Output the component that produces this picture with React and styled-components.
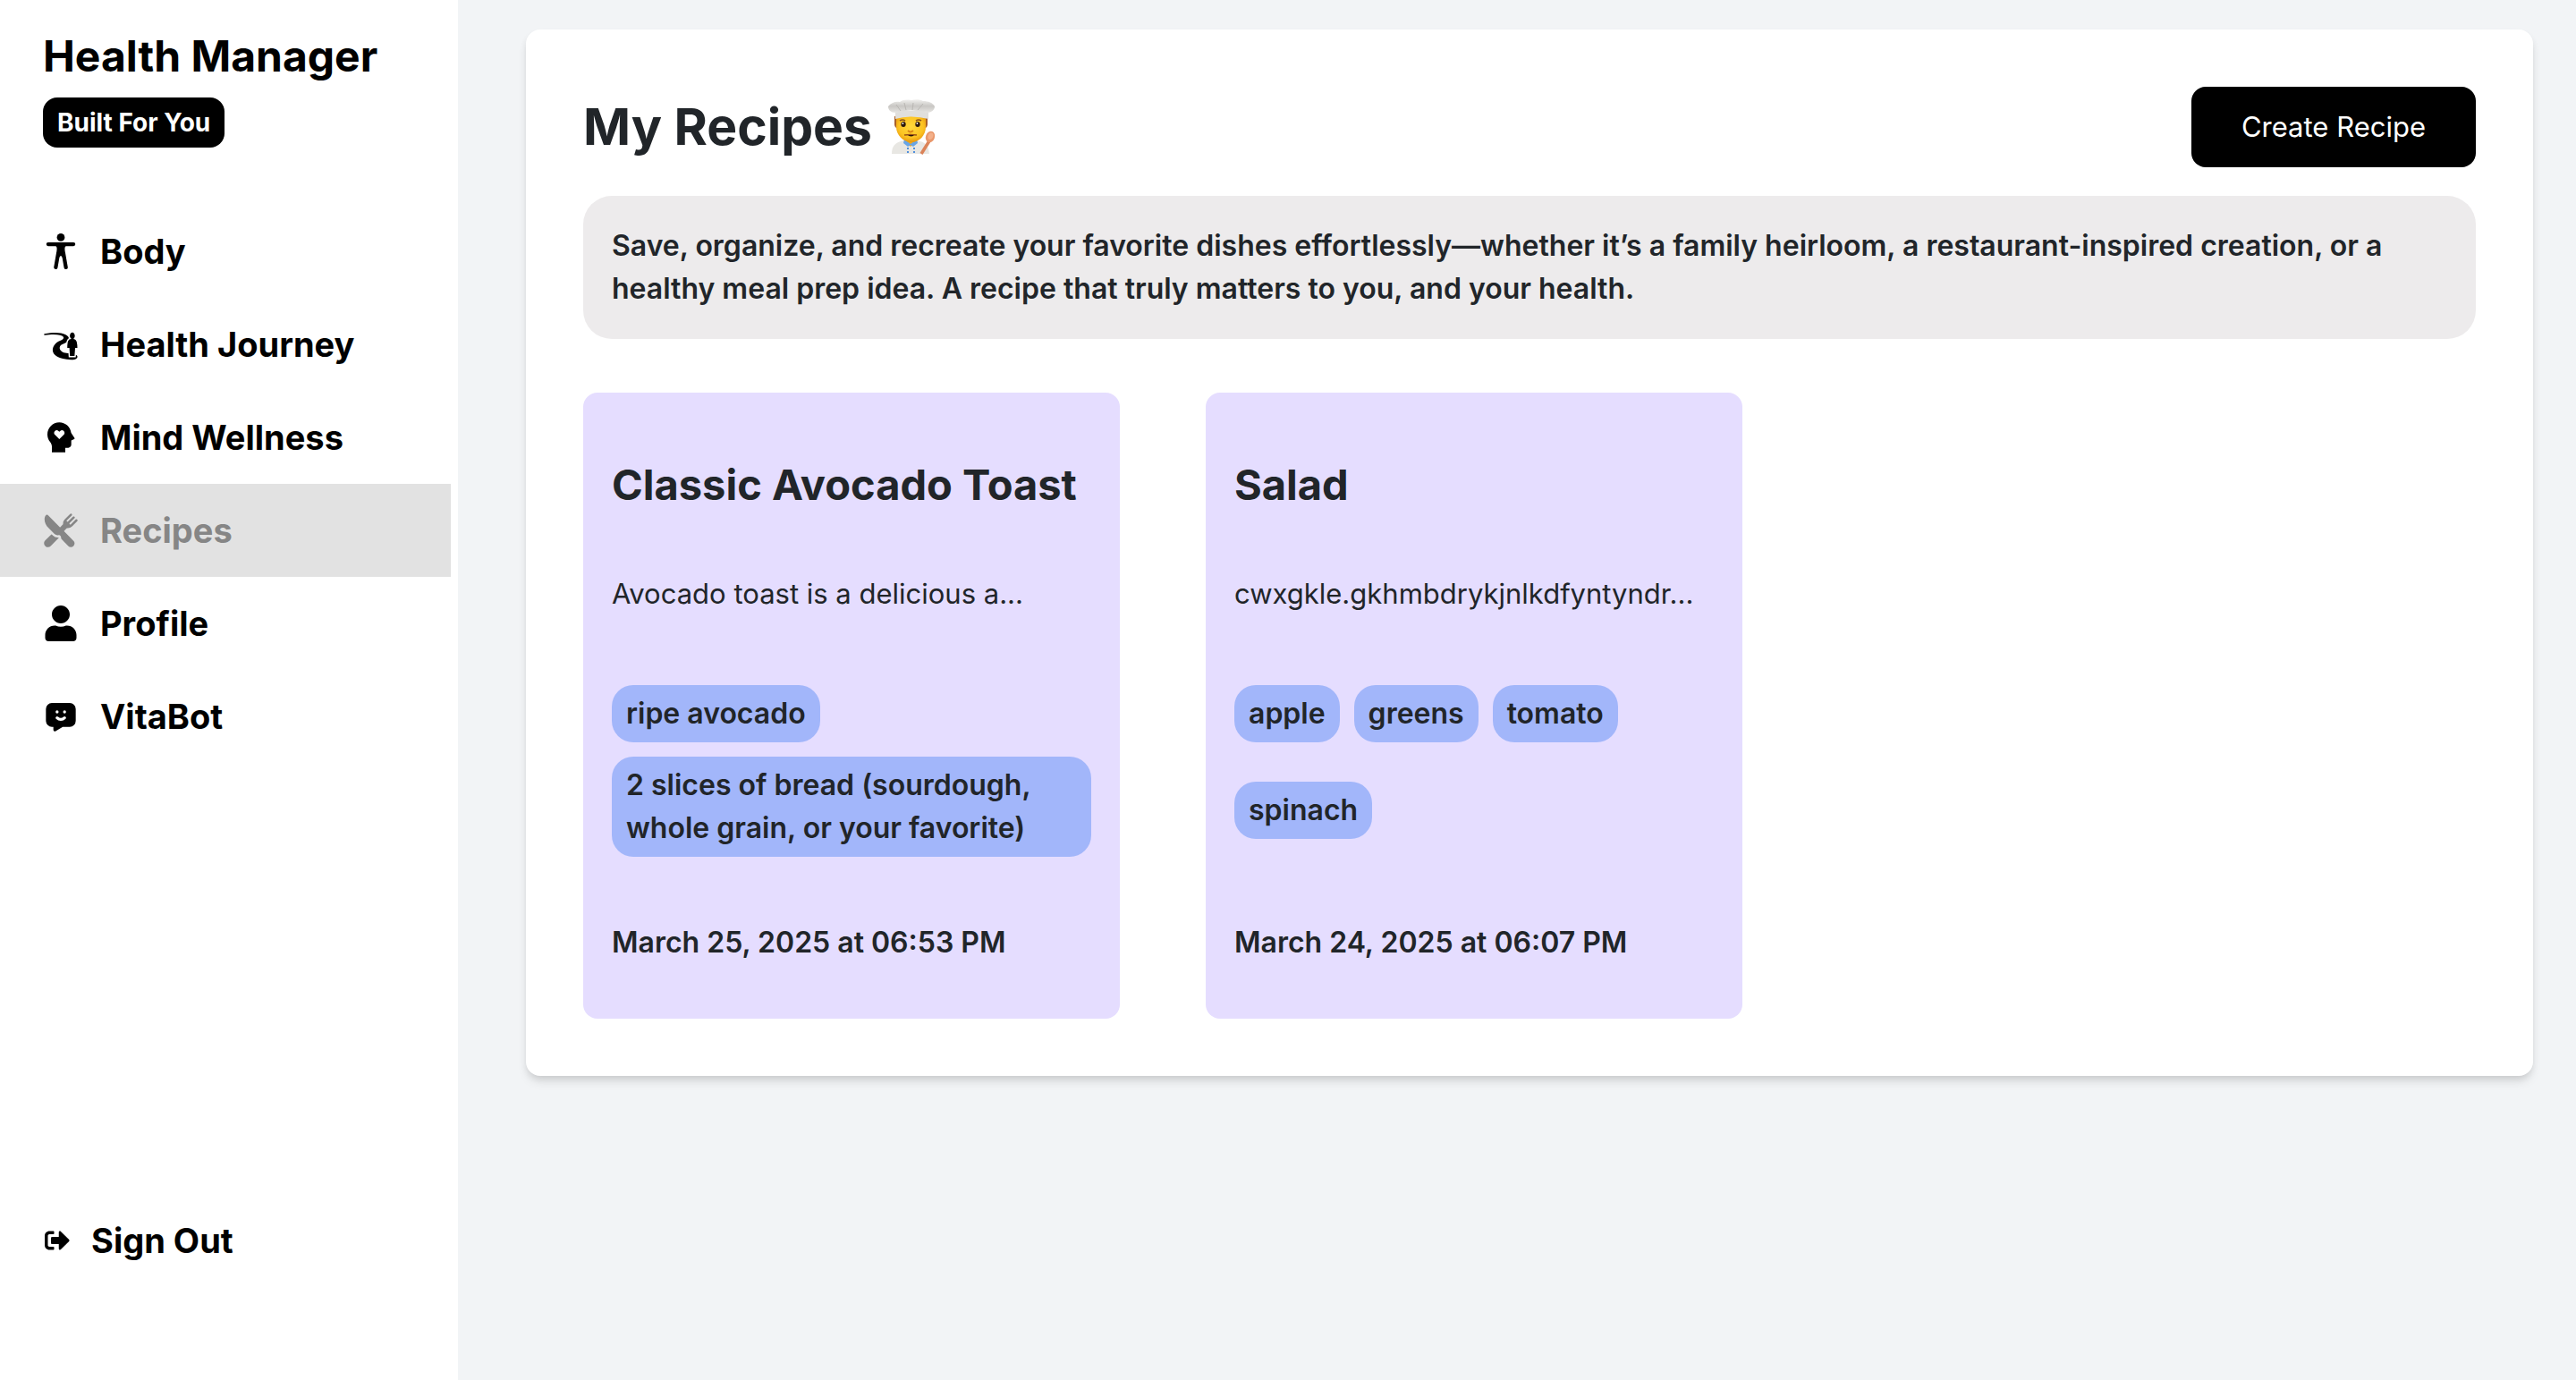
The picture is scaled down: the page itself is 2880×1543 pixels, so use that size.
import React from "react";
import styled, { createGlobalStyle } from "styled-components";
import { IoBody, IoRestaurant } from "react-icons/io5";
import { GiJourney } from "react-icons/gi";
import { RiMentalHealthFill } from "react-icons/ri";
import { FaUser, FaSignOutAlt } from "react-icons/fa";
import { TbMessageChatbotFilled } from "react-icons/tb";

const GlobalStyle = createGlobalStyle`
  *, *::before, *::after { box-sizing: border-box; }
  body {
    margin: 0;
    background: #f2f4f6;
    color: #212529;
    font-family: Inter, "Liberation Sans", sans-serif;
    font-size: 31px;
    line-height: 48px;
  }
  h1, h2, p, ul { margin: 0; padding: 0; }
  ul { list-style: none; }
`;

const Layout = styled.div`
  display: flex;
  min-height: 100vh;
`;

const Sidebar = styled.aside`
  flex: 0 0 512px;
  display: flex;
  flex-direction: column;
  background: #fff;
  color: #000;
  padding: 32px 8px 104px 0;
`;

const Brand = styled.div`
  display: flex;
  flex-direction: column;
  align-items: flex-start;
  gap: 16px;
  padding: 0 0 64px 48px;
`;

const BrandName = styled.h2`
  font-size: 48px;
  line-height: 61px;
  font-weight: 700;
`;

const Badge = styled.span`
  padding: 8px 16px;
  border-radius: 16px;
  background: #000;
  color: #fff;
  font-size: 28px;
  line-height: 40px;
  font-weight: 700;
`;

const Nav = styled.nav`
  flex: 1;
`;

const NavLink = styled.a`
  display: flex;
  align-items: center;
  gap: 24px;
  height: 104px;
  padding-left: 48px;
  font-size: 38px;
  font-weight: 700;
  text-decoration: none;
  color: ${(p) => (p.$active ? "#868686" : "#000")};
  background: ${(p) => (p.$active ? "#e2e2e2" : "transparent")};
  svg { width: 40px; height: 40px; flex: none; }
`;

const SignOut = styled.button`
  display: flex;
  align-items: center;
  gap: 22px;
  height: 104px;
  padding: 0 0 0 48px;
  border: 0;
  background: transparent;
  color: #000;
  font: inherit;
  font-size: 38px;
  font-weight: 700;
  svg { width: 32px; height: 28px; flex: none; }
`;

const Main = styled.main`
  flex: 1;
  min-width: 0;
  padding: 33px 48px 64px 76px;
`;

const Panel = styled.section`
  padding: 64px;
  border-radius: 16px;
  background: #fff;
  box-shadow: 0 8px 12px -2px rgba(0, 0, 0, 0.1), 0 4px 8px -2px rgba(0, 0, 0, 0.1);
`;

const Header = styled.header`
  display: flex;
  align-items: center;
  justify-content: space-between;
  margin-bottom: 32px;
`;

const Title = styled.h1`
  display: flex;
  align-items: center;
  gap: 16px;
  font-size: 57px;
  line-height: 72px;
  font-weight: 700;
  svg { width: 56px; height: 64px; }
`;

const CreateButton = styled.button`
  height: 90px;
  padding: 0 56px;
  border: 0;
  border-radius: 16px;
  background: #000;
  color: #fff;
  font: inherit;
`;

const Intro = styled.p`
  padding: 32px;
  margin-bottom: 60px;
  border-radius: 32px;
  background: #edebec;
  font-size: 32px;
  font-weight: 600;
`;

const Cards = styled.div`
  display: flex;
  flex-wrap: wrap;
  gap: 96px;
`;

const Card = styled.article`
  display: flex;
  flex-direction: column;
  width: 600px;
  padding: 72px 32px 61px;
  border-radius: 16px;
  background: #e5ddff;
`;

const CardTitle = styled.h2`
  margin-bottom: 68px;
  font-size: 47px;
  line-height: 61px;
  font-weight: 700;
`;

const Summary = styled.p`
  margin-bottom: 78px;
`;

const Tags = styled.ul`
  flex: 1;
  display: flex;
  flex-wrap: wrap;
  align-content: flex-start;
  gap: ${(p) => (p.$loose ? 44 : 16)}px 16px;
  margin-bottom: 72px;
`;

const Tag = styled.li`
  padding: 8px 16px;
  border-radius: 24px;
  background: #a2b6fa;
  font-size: 32px;
  font-weight: 600;
`;

const Stamp = styled.time`
  font-size: 32px;
  font-weight: 600;
`;

const Cook = () => (
  <svg viewBox="0 0 56 64" role="img" aria-label="Cook">
    <defs>
      <linearGradient id="hat" x1="0" y1="0" x2="0" y2="1">
        <stop offset="0" stopColor="#f1f0ee" />
        <stop offset="0.5" stopColor="#c9c7c4" />
        <stop offset="1" stopColor="#e6e5e2" />
      </linearGradient>
      <radialGradient id="face" cx="0.5" cy="0.4" r="0.6">
        <stop offset="0" stopColor="#ffd83c" />
        <stop offset="0.7" stopColor="#fcc321" />
        <stop offset="1" stopColor="#e8980f" />
      </radialGradient>
    </defs>
    <path d="M6 62c0-8 3-13 14-15h14c11 2 13 7 14 15z" fill="#e8e7e3" />
    <path d="M20 47l7 7 7-7v-4H20z" fill="#f0a81a" />
    <path d="M20 46l7 5 7-5 1 4-5 4-3-2-3 2-5-4z" fill="#68a5e6" />
    <path d="M24 55v7M31 55v7" stroke="#4f8fdc" strokeWidth="2" strokeDasharray="2 2" />
    <path d="M9 20h37v9c0 2-1 3-2 4H11c-1-1-2-2-2-4z" fill="#a8602a" />
    <path d="M11 20h33v12c0 9-7 17-16 17S11 41 11 32z" fill="url(#face)" />
    <path d="M15 25q3-2 6 0M33 25q3-2 6 0" stroke="#8c5317" strokeWidth="1.6" fill="none" />
    <ellipse cx="19" cy="29" rx="2.7" ry="3" fill="#2d1a0c" />
    <ellipse cx="35" cy="29" rx="2.7" ry="3" fill="#2d1a0c" />
    <circle cx="18.4" cy="28" r="0.9" fill="#fff" />
    <circle cx="34.4" cy="28" r="0.9" fill="#fff" />
    <path d="M24 36q3 3 6 0" stroke="#d98314" strokeWidth="1.8" fill="none" />
    <path d="M20 41q7-1 14 0" stroke="#9b5216" strokeWidth="1.6" fill="none" />
    <path d="M24 41h7q-3.500 3-7 0z" fill="#2b130a" />
    <path d="M10 14v9q18-5 37 0v-9z" fill="#e0dfdc" />
    <path d="M10 16C5 16 2 13 2 9c3-4 8-6 13-5 3-3 9-3 13-2 4-1 10-1 13 1 6 0 11 2 13 6 0 4-4 7-8 7q-18-5-36 0z" fill="url(#hat)" />
    <path d="M11 7l5 7M20 5l2 8M30 5l-1 8M41 6l-6 7" stroke="#b9b7b3" strokeWidth="1" fill="none" />
    <path d="M49 46L39 62" stroke="#db8358" strokeWidth="3.500" />
    <ellipse cx="49" cy="43" rx="5" ry="6.500" fill="#e9976b" transform="rotate(20 49 43)" />
    <ellipse cx="49.500" cy="42" rx="2.800" ry="4" fill="#f3b08a" transform="rotate(20 49 42)" />
  </svg>
);

const links = [
  { label: "Body", Icon: IoBody },
  { label: "Health Journey", Icon: GiJourney },
  { label: "Mind Wellness", Icon: RiMentalHealthFill },
  { label: "Recipes", Icon: IoRestaurant, active: true },
  { label: "Profile", Icon: FaUser },
  { label: "VitaBot", Icon: TbMessageChatbotFilled },
];

const recipes = [
  {
    title: "Classic Avocado Toast",
    summary: "Avocado toast is a delicious a...",
    tags: ["ripe avocado", "2 slices of bread (sourdough, whole grain, or your favorite)"],
    date: "March 25, 2025 at 06:53 PM",
  },
  {
    title: "Salad",
    summary: "cwxgkle.gkhmbdrykjnlkdfyntyndr...",
    tags: ["apple", "greens", "tomato", "spinach"],
    loose: true,
    date: "March 24, 2025 at 06:07 PM",
  },
];

export default function App() {
  return (
    <>
      <GlobalStyle />
      <Layout>
        <Sidebar>
          <Brand>
            <BrandName>Health Manager</BrandName>
            <Badge>Built For You</Badge>
          </Brand>
          <Nav>
            {links.map(({ label, Icon, active }) => (
              <NavLink key={label} href="#" $active={active}>
                <Icon />
                {label}
              </NavLink>
            ))}
          </Nav>
          <SignOut type="button">
            <FaSignOutAlt />
            Sign Out
          </SignOut>
        </Sidebar>
        <Main>
          <Panel>
            <Header>
              <Title>
                My Recipes
                <Cook />
              </Title>
              <CreateButton type="button">Create Recipe</CreateButton>
            </Header>
            <Intro>
              Save, organize, and recreate your favorite dishes effortlessly—whether it’s a family
              heirloom, a restaurant-inspired creation, or a healthy meal prep idea. A recipe that
              truly matters to you, and your health.
            </Intro>
            <Cards>
              {recipes.map((r) => (
                <Card key={r.title}>
                  <CardTitle>{r.title}</CardTitle>
                  <Summary>{r.summary}</Summary>
                  <Tags $loose={r.loose}>
                    {r.tags.map((t) => (
                      <Tag key={t}>{t}</Tag>
                    ))}
                  </Tags>
                  <Stamp>{r.date}</Stamp>
                </Card>
              ))}
            </Cards>
          </Panel>
        </Main>
      </Layout>
    </>
  );
}
